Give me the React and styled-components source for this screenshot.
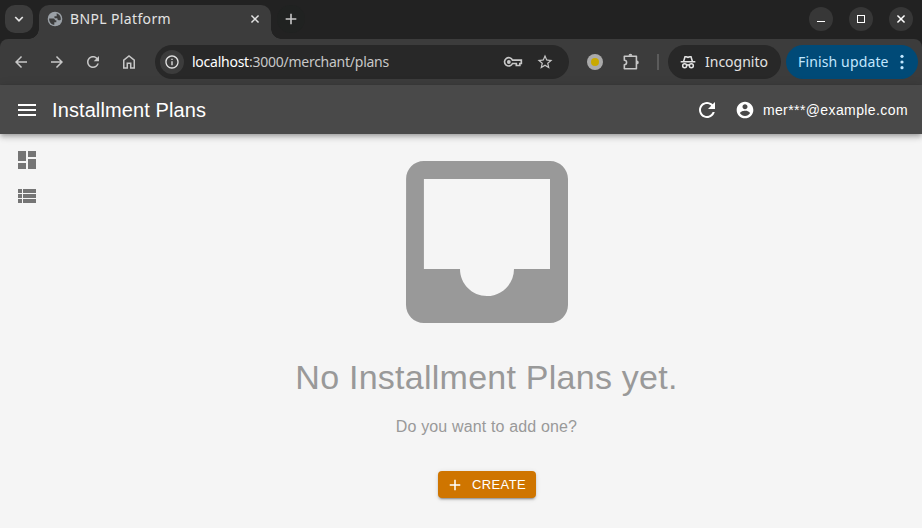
import React from "react";
import styled, { createGlobalStyle } from "styled-components";

const GlobalStyle = createGlobalStyle`
  * { box-sizing: border-box; }
  body { margin: 0; background: #f5f5f5; }
`;

const Window = styled.div`
  width: 922px;
  height: 528px;
  display: flex;
  flex-direction: column;
  overflow: hidden;
  background: #f5f5f5;
  font-family: "Liberation Sans", Arial, sans-serif;
`;

const Svg = styled.svg`
  display: block;
  flex: none;
  width: ${(p) => p.$size}px;
  height: ${(p) => p.$size}px;
  fill: currentColor;
`;

const Icon = ({ path, size = 24, children }) => (
  <Svg $size={size} viewBox="0 0 24 24" aria-hidden="true">
    {path && <path d={path} />}
    {children}
  </Svg>
);

const TabStrip = styled.header`
  height: 39px;
  flex: none;
  display: flex;
  background: #222;
  color: #e3e3e3;
  font-family: "Noto Sans", sans-serif;
`;

const TabSearch = styled.div`
  width: 28px;
  height: 28px;
  margin: 5px 6px 0 5px;
  display: grid;
  place-items: center;
  border-radius: 10px;
  background: #3c3c3c;
`;

const Tab = styled.div`
  position: relative;
  width: 232px;
  height: 34px;
  margin-top: 5px;
  padding: 0 11px 6px 8px;
  display: flex;
  align-items: center;
  border-radius: 10px 10px 0 0;
  background: #3c3c3c;
  &::before, &::after {
    content: "";
    position: absolute;
    bottom: 0;
    width: 10px;
    height: 10px;
  }
  &::before { left: -10px; background: radial-gradient(circle at 0 0, transparent 9.5px, #3c3c3c 10px); }
  &::after { right: -10px; background: radial-gradient(circle at 100% 0, transparent 9.5px, #3c3c3c 10px); }
`;

const TabTitle = styled.span`
  flex: 1;
  margin-left: 7px;
  font-size: 14px;
  line-height: 20px;
  letter-spacing: 0.36px;
  white-space: nowrap;
`;

const NewTab = styled.div`
  width: 28px;
  height: 28px;
  margin: 5px 0 0 6px;
  display: grid;
  place-items: center;
  border-radius: 50%;
  color: #c7c7c7;
  background: #202221;
`;

const WindowControls = styled.div`
  display: flex;
  gap: 16px;
  margin: 7px 9px 0 auto;
`;

const WindowButton = styled.div`
  width: 24px;
  height: 24px;
  display: grid;
  place-items: center;
  border-radius: 50%;
  background: #373737;
  color: #fff;
`;

const BrowserFrame = styled.div`
  flex: none;
  background: #222;
`;

const BrowserBar = styled.nav`
  height: 46px;
  display: flex;
  align-items: center;
  padding: 0 4px 0 12px;
  border-radius: 8px 8px 0 0;
  background: #3c3c3c;
  color: #c7c7c7;
  font-family: "Noto Sans", sans-serif;
`;

const NavButtons = styled.div`
  display: flex;
  gap: 18px;
  width: 143px;
`;

const AddressBar = styled.div`
  width: 414px;
  height: 34px;
  flex: none;
  display: flex;
  align-items: center;
  padding: 0 15px 0 5px;
  border-radius: 17px;
  background: #282828;
`;

const SiteInfo = styled.div`
  width: 24px;
  height: 24px;
  display: grid;
  place-items: center;
  border-radius: 50%;
  background: #3c3c3c;
  color: #e3e3e3;
`;

const Url = styled.span`
  flex: 1;
  margin-left: 8px;
  font-size: 14px;
  line-height: 20px;
  letter-spacing: -0.25px;
  white-space: nowrap;
  color: #c7c7c7;
`;

const Host = styled.span`
  color: #fff;
`;

const AddressActions = styled.div`
  display: flex;
  gap: 13px;
  align-items: center;
`;

const Extension = styled.div`
  width: 16px;
  height: 16px;
  flex: none;
  margin: 0 18px;
  display: grid;
  place-items: center;
  border-radius: 50%;
  background: #aaa;
  &::after {
    content: "";
    width: 8px;
    height: 8px;
    border-radius: 50%;
    background: #c9a900;
  }
`;

const Divider = styled.div`
  width: 2px;
  height: 16px;
  flex: none;
  margin: 0 9px 0 16px;
  background: #5b5b5b;
`;

const Pill = styled.div`
  height: 34px;
  flex: none;
  display: flex;
  align-items: center;
  justify-content: space-between;
  border-radius: 17px;
  font-size: 14px;
  line-height: 20px;
  white-space: nowrap;
`;

const IncognitoPill = styled(Pill)`
  width: 113px;
  padding: 0 13px 0 12px;
  background: #282828;
  color: #e3e3e3;
`;

const UpdatePill = styled(Pill)`
  width: 132px;
  margin-left: 5px;
  padding: 0 8px 0 12px;
  background: #004a77;
  color: #c2e7ff;
  letter-spacing: 0.14px;
`;

const AppBar = styled.header`
  position: relative;
  height: 49px;
  flex: none;
  display: flex;
  align-items: center;
  padding: 1px 14px 0 15px;
  background: #494949;
  color: #fff;
  box-shadow: 0 2px 4px -1px rgba(0, 0, 0, 0.2), 0 4px 5px rgba(0, 0, 0, 0.14), 0 1px 10px rgba(0, 0, 0, 0.12);
`;

const PageTitle = styled.h1`
  flex: 1;
  margin: 0 0 0 13px;
  font-size: 20px;
  font-weight: 400;
  line-height: 32px;
  letter-spacing: 0.1px;
`;

const Account = styled.div`
  display: flex;
  align-items: center;
  gap: 8px;
  margin-left: 16px;
  font-size: 14px;
  line-height: 24px;
  letter-spacing: 0.4px;
`;

const Body = styled.div`
  flex: 1;
  min-height: 0;
  display: flex;
`;

const Sidebar = styled.aside`
  width: 52px;
  display: flex;
  flex-direction: column;
  gap: 12px;
  padding: 14px 0 0 15px;
  color: #757575;
`;

const EmptyState = styled.main`
  flex: 1;
  display: flex;
  flex-direction: column;
  align-items: center;
  color: #999;
`;

const EmptyTitle = styled.h2`
  margin: 6px 1px 0 0;
  font-size: 34px;
  font-weight: 400;
  line-height: 42px;
  letter-spacing: 0.25px;
`;

const EmptyText = styled.p`
  margin: 17px 1px 0 0;
  font-size: 16px;
  line-height: 24px;
  letter-spacing: 0.15px;
`;

const CreateButton = styled.button`
  width: 98px;
  height: 27px;
  margin-top: 32px;
  padding: 0 10px 0 8px;
  display: flex;
  align-items: center;
  justify-content: space-between;
  border: 0;
  border-radius: 4px;
  background: #cf7500;
  color: #fff;
  font: 13px "Liberation Sans", Arial, sans-serif;
  letter-spacing: 0.37px;
  box-shadow: 0 3px 1px -2px rgba(0, 0, 0, 0.2), 0 2px 2px rgba(0, 0, 0, 0.14), 0 1px 5px rgba(0, 0, 0, 0.12);
`;

const paths = {
  back: "M20 11H7.83l5.59-5.59L12 4l-8 8 8 8 1.41-1.41L7.83 13H20v-2z",
  forward: "m12 4-1.41 1.41L16.17 11H4v2h12.17l-5.58 5.59L12 20l8-8z",
  refresh: "M17.65 6.35C16.2 4.9 14.21 4 12 4c-4.42 0-7.99 3.58-7.99 8s3.57 8 7.99 8c3.73 0 6.84-2.55 7.73-6h-2.08c-.82 2.33-3.04 4-5.65 4-3.31 0-6-2.69-6-6s2.69-6 6-6c1.66 0 3.14.69 4.22 1.78L13 11h7V4l-2.35 2.35z",
  info: "M11 7h2v2h-2zm0 4h2v6h-2zm1-9C6.48 2 2 6.48 2 12s4.48 10 10 10 10-4.48 10-10S17.52 2 12 2zm0 18c-4.41 0-8-3.59-8-8s3.59-8 8-8 8 3.59 8 8-3.59 8-8 8z",
  star: "m22 9.24-7.19-.62L12 2 9.19 8.63 2 9.24l5.46 4.73L5.82 21 12 17.27 18.18 21l-1.63-7.03L22 9.24zM12 15.4l-3.76 2.27 1-4.28-3.32-2.88 4.38-.38L12 6.1l1.71 4.04 4.38.38-3.32 2.88 1 4.28L12 15.4z",
  menu: "M3 18h18v-2H3v2zm0-5h18v-2H3v2zm0-7v2h18V6H3z",
  account: "M12 2C6.48 2 2 6.48 2 12s4.48 10 10 10 10-4.48 10-10S17.52 2 12 2zm0 3c1.66 0 3 1.34 3 3s-1.34 3-3 3-3-1.34-3-3 1.34-3 3-3zm0 14.2c-2.5 0-4.71-1.28-6-3.22.03-1.99 4-3.08 6-3.08 1.99 0 5.97 1.09 6 3.08-1.29 1.94-3.5 3.22-6 3.22z",
  dashboard: "M3 13h8V3H3v10zm0 8h8v-6H3v6zm10 0h8V11h-8v10zm0-18v6h8V3h-8z",
  list: "M3 14h4v-4H3v4zm0 5h4v-4H3v4zM3 9h4V5H3v4zm5 5h13v-4H8v4zm0 5h13v-4H8v4zM8 5v4h13V5H8z",
  inbox: "M19 3H4.99c-1.11 0-1.98.89-1.98 2L3 19c0 1.1.88 2 1.99 2H19c1.1 0 2-.9 2-2V5c0-1.11-.9-2-2-2zm0 12h-4c0 1.66-1.35 3-3 3s-3-1.34-3-3H4.99V5H19v10z",
  add: "M19 13h-6v6h-2v-6H5v-2h6V5h2v6h6v2z",
};

const Favicon = styled.span`
  color: #9aa0a6;
`;

const GlobeIcon = () => (
  <Favicon>
    <Icon size={16}>
      <circle cx="12" cy="12" r="11" />
      <path
        d="M3.2 11.2h5.600c1.800 0 3.200 1 3.200 2.800h2v3h-3v3.800C6.500 20.500 3 16.500 3.200 11.200zM14.500 3.500c4 1.300 6.500 5 6.300 9.200-1.100 1-2 1.500-3.300 1.300-1.700-.2-2-1.500-2-3h-4.300V7.800h3.300z"
        fill="#3c3c3c"
      />
    </Icon>
  </Favicon>
);

const HomeIcon = () => (
  <Icon size={18}>
    <path d="M5 20V9.600L12 4l7 5.600V20h-4.700v-6.500H9.700V20z" fill="none" stroke="currentColor" strokeWidth="2" />
  </Icon>
);

const KeyIcon = () => (
  <Icon size={20}>
    <path d="M11.400 9.800H22v4h-1.800v2.400H16v-2.400h-4.600a5 5 0 1 1 0-4z" fill="none" stroke="currentColor" strokeWidth="2" />
    <circle cx="7" cy="12" r="2.300" />
  </Icon>
);

const PuzzleIcon = () => (
  <Icon size={20}>
    <path d="M4 5h14.500v15H4v-4.800a2.700 2.700 0 0 0 0-5.400z" fill="none" stroke="currentColor" strokeWidth="1.900" strokeLinejoin="round" />
    <path d="M9 4.500a2.300 2.300 0 0 1 4.600 0zM19 10.200a2.300 2.300 0 0 1 0 4.600z" />
  </Icon>
);

const IncognitoIcon = () => (
  <Icon size={16}>
    <g fill="none" stroke="currentColor" strokeWidth="2.300">
      <path d="M1 11.500h22M5.500 11l2-7h1.800l2.700 1 2.700-1h1.800l2 7" />
      <circle cx="7" cy="17.500" r="3" />
      <circle cx="17" cy="17.500" r="3" />
      <path d="M10 17q2-1.500 4 0" />
    </g>
  </Icon>
);

const MoreIcon = () => (
  <Icon size={16}>
    <circle cx="12" cy="3.500" r="2.400" />
    <circle cx="12" cy="12" r="2.400" />
    <circle cx="12" cy="20.500" r="2.400" />
  </Icon>
);

const Cross = ({ size }) => (
  <Icon size={size}>
    <path d="M3.500 3.500l17 17M20.500 3.500l-17 17" stroke="currentColor" strokeWidth="3.600" />
  </Icon>
);

export default function App() {
  return (
    <Window>
      <GlobalStyle />
      <TabStrip>
        <TabSearch>
          <Icon size={12}>
            <path d="M4.500 8l7.500 7.500L19.500 8" fill="none" stroke="currentColor" strokeWidth="3.500" />
          </Icon>
        </TabSearch>
        <Tab>
          <GlobeIcon />
          <TabTitle>BNPL Platform</TabTitle>
          <Cross size={10} />
        </Tab>
        <NewTab>
          <Icon size={16} path="M4 10.800h6.800V4h2.400v6.800H20v2.400h-6.800V20h-2.400v-6.800H4z" />
        </NewTab>
        <WindowControls>
          <WindowButton><Icon size={12} path="M4 16h16v2H4z" /></WindowButton>
          <WindowButton><Icon size={12} path="M4 4h16v16H4zM6 6v12h12V6z" /></WindowButton>
          <WindowButton><Cross size={10} /></WindowButton>
        </WindowControls>
      </TabStrip>
      <BrowserFrame>
        <BrowserBar>
          <NavButtons>
            <Icon size={18} path={paths.back} />
            <Icon size={18} path={paths.forward} />
            <Icon size={18} path={paths.refresh} />
            <HomeIcon />
          </NavButtons>
          <AddressBar>
            <SiteInfo><Icon size={16} path={paths.info} /></SiteInfo>
            <Url><Host>localhost</Host>:3000/merchant/plans</Url>
            <AddressActions>
              <KeyIcon />
              <Icon size={18} path={paths.star} />
            </AddressActions>
          </AddressBar>
          <Extension />
          <PuzzleIcon />
          <Divider />
          <IncognitoPill>
            <IncognitoIcon />
            <span>Incognito</span>
          </IncognitoPill>
          <UpdatePill>
            <span>Finish update</span>
            <MoreIcon />
          </UpdatePill>
        </BrowserBar>
      </BrowserFrame>
      <AppBar>
        <Icon path={paths.menu} />
        <PageTitle>Installment Plans</PageTitle>
        <Icon path={paths.refresh} />
        <Account>
          <Icon size={20} path={paths.account} />
          <span>mer***@example.com</span>
        </Account>
      </AppBar>
      <Body>
        <Sidebar>
          <Icon path={paths.dashboard} />
          <Icon path={paths.list} />
        </Sidebar>
        <EmptyState>
          <Icon size={216} path={paths.inbox} />
          <EmptyTitle>No Installment Plans yet.</EmptyTitle>
          <EmptyText>Do you want to add one?</EmptyText>
          <CreateButton>
            <Icon size={18} path={paths.add} />
            CREATE
          </CreateButton>
        </EmptyState>
      </Body>
    </Window>
  );
}
